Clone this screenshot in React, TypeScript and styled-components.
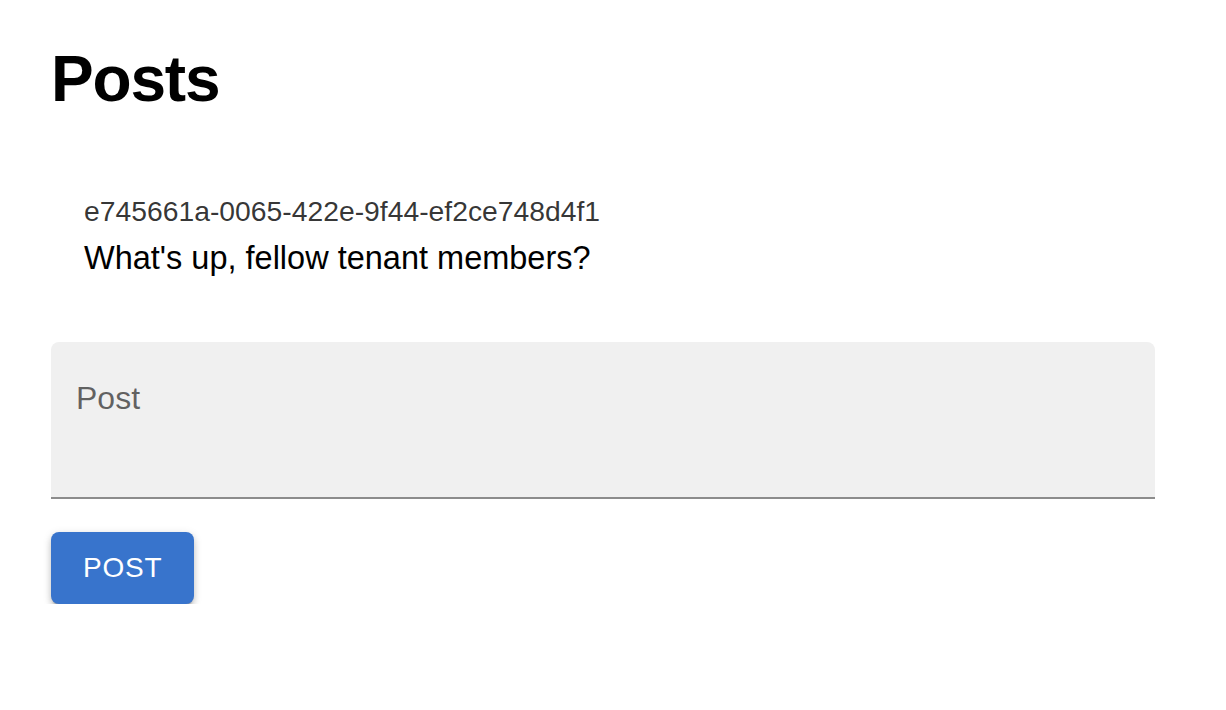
import { FC, useState } from "react";
import styled, { createGlobalStyle } from "styled-components";

const GlobalStyle = createGlobalStyle`
  html, body {
    margin: 0;
    padding: 0;
    background: #ffffff;
  }

  body {
    font-family: "Liberation Sans", Arial, Helvetica, sans-serif;
    color: #000000;
  }
`;

interface Post {
  id: string;
  content: string;
}

const POSTS: Post[] = [
  {
    id: "e745661a-0065-422e-9f44-ef2ce748d4f1",
    content: "What's up, fellow tenant members?",
  },
];

const App = () => {
  const [draft, setDraft] = useState("");

  return (
    <>
      <GlobalStyle />
      <Page>
        <Title>Posts</Title>

        <PostList>
          {POSTS.map((p) => (
            <PostItem key={p.id} {...p} />
          ))}
        </PostList>

        <Form onSubmit={(ev) => ev.preventDefault()}>
          <Field>
            <FieldLabel htmlFor="post-input">Post</FieldLabel>
            <FieldInput
              id="post-input"
              rows={2}
              value={draft}
              onChange={(ev) => setDraft(ev.target.value)}
            />
          </Field>
          <SubmitButton type="submit">Post</SubmitButton>
        </Form>
      </Page>
    </>
  );
};

export default App;

const PostItem: FC<Post> = ({ id, content }) => (
  <PostRow>
    <PostId>{id}</PostId>
    <PostContent>{content}</PostContent>
  </PostRow>
);

const Page = styled.div`
  display: flex;
  flex-direction: column;
  padding: 47px 71px 0 51px;
`;

const Title = styled.h1`
  margin: 0;
  font-size: 64px;
  line-height: 64px;
  font-weight: 700;
  letter-spacing: -1.2px;
`;

const PostList = styled.ul`
  list-style: none;
  margin: 80px 0 0;
  padding: 0;
`;

const PostRow = styled.li`
  display: flex;
  flex-direction: column;
  gap: 5px;
  padding: 0 33px;
`;

const PostId = styled.div`
  font-size: 28.3px;
  line-height: 40px;
  color: rgba(0, 0, 0, 0.8);
`;

const PostContent = styled.div`
  font-size: 32.5px;
  line-height: 44px;
  color: #000000;
`;

const Form = styled.form`
  display: flex;
  flex-direction: column;
  align-items: flex-start;
  margin-top: 62px;
`;

const Field = styled.div`
  position: relative;
  box-sizing: border-box;
  width: 100%;
  height: 157px;
  background: #f0f0f0;
  border-radius: 8px 8px 0 0;
  border-bottom: 2px solid #8c8c8c;
`;

const FieldLabel = styled.label`
  position: absolute;
  left: 25px;
  top: 36px;
  font-size: 32px;
  line-height: 40px;
  color: rgba(0, 0, 0, 0.6);
  pointer-events: none;
`;

const FieldInput = styled.textarea`
  box-sizing: border-box;
  display: block;
  width: 100%;
  height: 100%;
  padding: 50px 24px 16px;
  border: none;
  outline: none;
  resize: none;
  background: transparent;
  font-family: inherit;
  font-size: 32px;
  line-height: 46px;
  color: #000000;
`;

const SubmitButton = styled.button`
  display: inline-flex;
  align-items: center;
  justify-content: center;
  box-sizing: border-box;
  height: 72px;
  margin-top: 33px;
  padding: 0 32px;
  border: none;
  border-radius: 8px;
  background: #3874cc;
  color: #ffffff;
  font-family: inherit;
  font-size: 28px;
  font-weight: 500;
  letter-spacing: 0.8px;
  text-transform: uppercase;
  cursor: pointer;
  box-shadow: 0 4px 2px -2px rgba(0, 0, 0, 0.22), 0 4px 6px 0 rgba(0, 0, 0, 0.16),
    0 2px 10px 0 rgba(0, 0, 0, 0.12);
`;
